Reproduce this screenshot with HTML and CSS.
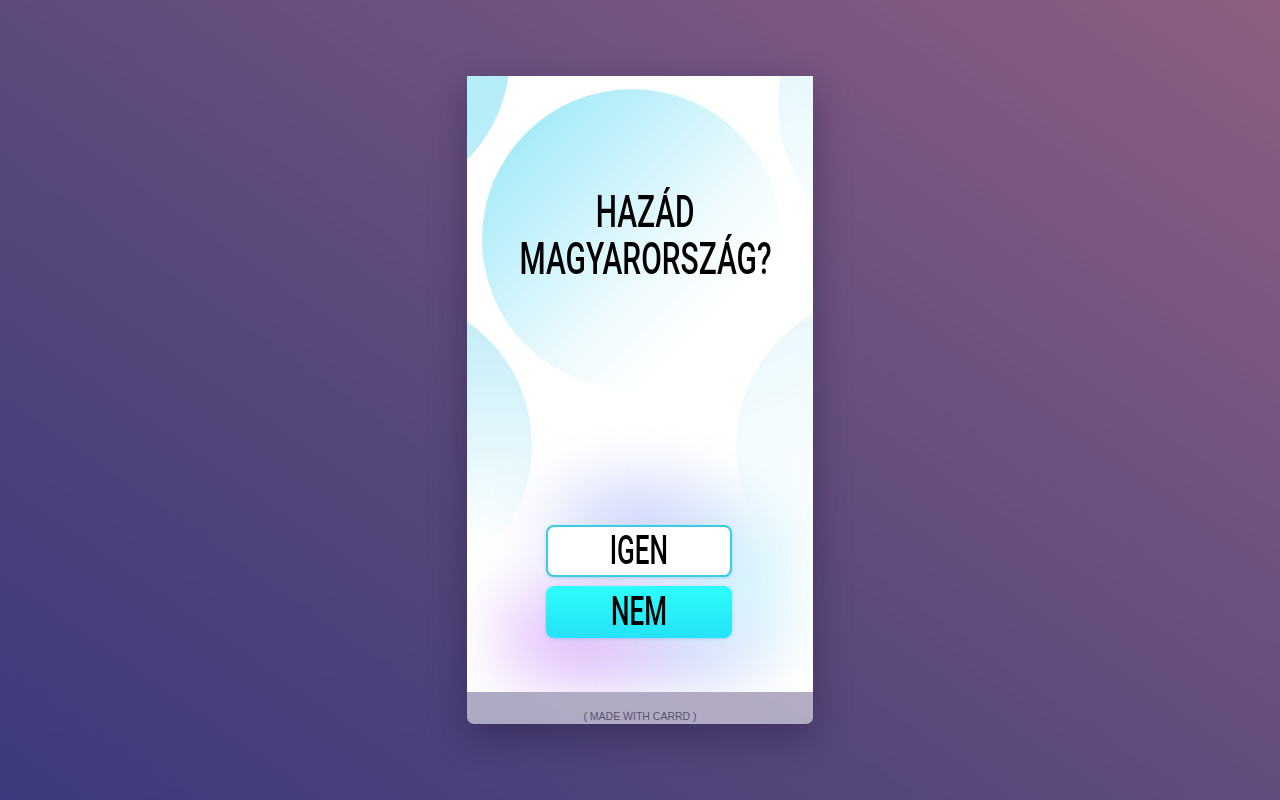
FILE: index.html
```html
<!DOCTYPE html>
<html lang="hu">
<head>
<meta charset="utf-8">
<title>Hazád Magyarország?</title>
<link rel="stylesheet" href="styles.css">
</head>
<body>
<div class="page">
  <div class="card">
    <div class="content">
      <div class="bubble b-tl"></div>
      <div class="bubble b-main"></div>
      <div class="bubble b-tr"></div>
      <div class="bubble b-ml"></div>
      <div class="bubble b-mr"></div>
      <div class="glow"></div>
      <h1 class="title">
        <span class="line"><span class="tall">HAZÁD</span></span>
        <span class="line"><span class="tall">MAGYARORSZÁG?</span></span>
      </h1>
      <div class="buttons">
        <a class="btn btn-yes" href="#"><span class="squeeze">IGEN</span></a>
        <a class="btn btn-no" href="#"><span class="squeeze">NEM</span></a>
      </div>
    </div>
    <div class="footer">( MADE WITH CARRD )</div>
  </div>
</div>
</body>
</html>
```
FILE: styles.css
```css
* { box-sizing: border-box; }
html, body { margin: 0; padding: 0; height: 100%; }
body {
  background: linear-gradient(35deg, #3c3a7c 0%, #54467a 35%, #6c5280 65%, #8e5f80 100%);
  font-family: "Liberation Sans", Arial, sans-serif;
}
.page {
  display: flex;
  justify-content: center;
  padding-top: 76px;
}
.card {
  width: 346px;
  height: 648px;
  display: flex;
  flex-direction: column;
  border-radius: 0 0 7px 7px;
  overflow: hidden;
  box-shadow: 0 12px 36px rgba(20, 10, 50, 0.35);
}
.content {
  position: relative;
  flex: 1;
  background: #fff;
  overflow: hidden;
  display: flex;
  flex-direction: column;
  align-items: center;
}
.bubble {
  position: absolute;
  width: 300px;
  height: 300px;
  border-radius: 50%;
}
.b-tl {
  left: -257px; top: -171px;
  background: linear-gradient(135deg, #a8e9f7 0%, #b6edf9 80%, #c4f0fa 100%);
}
.b-main {
  left: 15px; top: 13px;
  background: linear-gradient(135deg, #92e6f7 0%, #c8f2fb 35%, #f0fbfe 60%, #ffffff 78%);
}
.b-tr {
  left: 311px; top: -121px;
  background: linear-gradient(160deg, #d8f3fc 0%, #eefafe 45%, #ffffff 80%);
}
.b-ml {
  left: -235px; top: 219px;
  background: linear-gradient(180deg, #bdebf8 0%, #e4f7fc 50%, #ffffff 85%);
}
.b-mr {
  left: 269px; top: 219px;
  background: linear-gradient(160deg, #e6f7fc 0%, #f5fcfe 40%, #ffffff 70%);
}
.glow {
  position: absolute;
  left: 15px; top: 380px;
  width: 325px;
  height: 245px;
  background:
    radial-gradient(ellipse 36% 38% at 28% 74%, rgba(214, 170, 248, 0.8), rgba(214, 170, 248, 0) 100%),
    radial-gradient(ellipse 40% 36% at 48% 30%, rgba(186, 196, 248, 0.75), rgba(186, 196, 248, 0) 100%),
    radial-gradient(ellipse 34% 46% at 78% 50%, rgba(176, 234, 250, 0.6), rgba(176, 234, 250, 0) 100%),
    radial-gradient(ellipse 38% 30% at 60% 80%, rgba(196, 198, 248, 0.7), rgba(196, 198, 248, 0) 100%);
  filter: blur(20px);
}
.title {
  position: relative;
  margin: 0;
  padding: 112px 0 0 10px;
  font-family: Roboto, "Liberation Sans", sans-serif;
  font-weight: 500;
  font-size: 40px;
  line-height: 47px;
  color: #000;
  text-align: center;
  white-space: nowrap;
}
.line {
  display: block;
  height: 47px;
}
.tall {
  display: inline-block;
  line-height: 41px;
  transform: scale(0.748, 1.125);
  transform-origin: center;
}
.squeeze {
  display: inline-block;
  transform: scaleX(0.65);
  transform-origin: center;
}
.buttons {
  position: relative;
  margin-top: auto;
  padding: 0 2px 54px 0;
  display: flex;
  flex-direction: column;
  gap: 9px;
}
.btn {
  width: 186px;
  height: 52px;
  border-radius: 8px;
  display: flex;
  align-items: center;
  justify-content: center;
  text-decoration: none;
  color: #000;
  font-family: Roboto, "Liberation Sans", sans-serif;
  font-weight: 500;
  font-size: 40px;
  line-height: 1;
}
.btn-yes {
  background: #fff;
  border: 2px solid #3ccbe0;
  box-shadow: 0 1px 3px rgba(60, 180, 220, 0.35);
}
.btn-no {
  background: linear-gradient(180deg, #2efdfb 0%, #24e2f7 100%);
  box-shadow: 0 1px 3px rgba(60, 160, 220, 0.35);
}
.footer {
  height: 32px;
  background: rgba(255, 255, 255, 0.55);
  color: #58526e;
  font-size: 10.5px;
  line-height: 14px;
  padding-top: 17px;
  text-align: center;
}
```
